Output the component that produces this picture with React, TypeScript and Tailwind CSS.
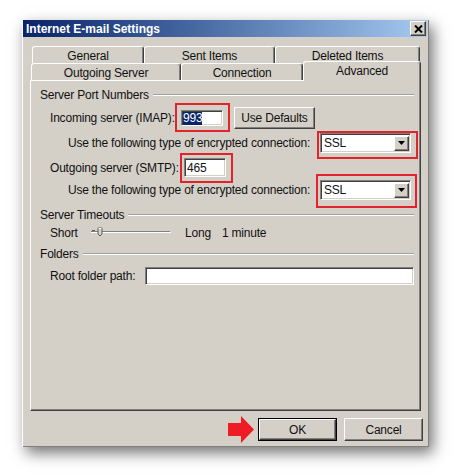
import React from 'react';

// win2000 style bevels
const sunken =
  'border border-t-[#808080] border-l-[#808080] border-b-white border-r-white shadow-[inset_1px_1px_0_#404040,inset_-1px_-1px_0_#d4d0c8]';
const raised =
  'border border-t-white border-l-white border-b-[#404040] border-r-[#404040] shadow-[inset_-1px_-1px_0_#808080]';

const Tab = ({ label, className }: { label: string; className: string }) => (
  <div
    className={`h-[17px] flex items-center justify-center pt-[1px] rounded-t-[3px] bg-[#d4d0c8] border-t border-l border-r border-t-white border-l-white border-r-[#404040] shadow-[inset_-1px_0_0_#808080] ${className}`}
  >
    {label}
  </div>
);

const GroupHeader = ({ title }: { title: string }) => (
  <div className="h-[14px] flex items-center">
    <span className="leading-[14px]">{title}</span>
    <div className="flex-1 ml-[4px] h-0 border-t border-t-[#a0a0a0] border-b border-b-white" />
  </div>
);

const Select = ({ value }: { value: string }) => (
  <div className={`w-[91px] h-[20px] bg-white flex items-center justify-between pl-[3px] pr-[1px] ${sunken}`}>
    <span className="leading-[14px]">{value}</span>
    <div className={`w-[15px] h-[15px] bg-[#d4d0c8] flex items-center justify-center ${raised}`}>
      <svg width="7" height="4" viewBox="0 0 7 4">
        <path d="M0 0h7L3.5 4z" fill="#000" />
      </svg>
    </div>
  </div>
);

const Mark = ({ className }: { className: string }) => (
  <div className={`absolute border-2 border-[#e3232c] pointer-events-none ${className}`} />
);

export default function App() {
  return (
    <div className="w-[458px] h-[476px] bg-white pt-[20px] pl-[22px] font-['Liberation_Sans',Arial,sans-serif] text-[12px] tracking-[-0.2px] text-[#111]">
      <div className="w-[407px] h-[427px] bg-[#d4d0c8] border-l border-l-white flex flex-col shadow-[inset_-1px_-1px_0_#808080,4px_6px_14px_rgba(0,0,0,0.55)]">
        {/* title bar */}
        <div className="h-[17px] mr-[2px] flex items-start justify-between bg-linear-to-r from-[#0a246a] to-[#a6caf0]">
          <span className="pl-[3px] h-[17px] flex items-center text-white font-bold tracking-normal">
            Internet E-mail Settings
          </span>
          <div className={`mt-[1px] mr-[1px] w-[16px] h-[15px] bg-[#d4d0c8] flex items-center justify-center ${raised}`}>
            <svg width="9" height="8" viewBox="0 0 9 8">
              <path d="M1 0.5l7 7M8 0.5l-7 7" stroke="#000" strokeWidth="2" />
            </svg>
          </div>
        </div>

        {/* tabs */}
        <div className="mt-[9px] ml-[9px] flex h-[17px]">
          <Tab label="General" className="w-[112px]" />
          <Tab label="Sent Items" className="w-[131px]" />
          <Tab label="Deleted Items" className="w-[145px]" />
        </div>
        <div className="ml-[8px] flex h-[17px] items-end relative z-10">
          <Tab label="Outgoing Server" className="w-[150px]" />
          <Tab label="Connection" className="w-[122px]" />
          <div className="w-[118px] h-[20px] mb-[-1px] pb-[1px] flex items-center justify-center rounded-t-[3px] bg-[#d4d0c8] border-t border-l border-r border-t-white border-l-white border-r-[#404040] shadow-[inset_-1px_0_0_#808080]">
            Advanced
          </div>
        </div>

        {/* panel */}
        <div className="ml-[7px] w-[391px] h-[331px] border border-t-white border-l-white border-b-[#404040] border-r-[#404040] shadow-[inset_-1px_-1px_0_#808080]">
          <div className="pl-[9px] pr-[6px] pt-[7px] flex flex-col">
            <GroupHeader title="Server Port Numbers" />

            <div className="mt-[5px] h-[22px] flex items-center pl-[10px]">
              <span className="w-[131px]">Incoming server (IMAP):</span>
              <div className="relative">
                <div className={`w-[42px] h-[16px] bg-white flex items-center pl-[1px] ${sunken}`}>
                  <span className="bg-[#0a246a] text-white leading-[13px]">993</span>
                </div>
                <Mark className="-left-[6px] -right-[7px] -top-[7px] -bottom-[6px]" />
              </div>
              <button className={`ml-[11px] w-[81px] h-[22px] bg-[#d4d0c8] ${raised}`}>Use Defaults</button>
            </div>

            <div className="mt-[4px] h-[20px] flex items-center pl-[28px]">
              <span className="w-[252px]">Use the following type of encrypted connection:</span>
              <div className="relative">
                <Select value="SSL" />
                <Mark className="-left-[3px] -right-[7px] -top-[2px] -bottom-[6px]" />
              </div>
            </div>

            <div className="mt-[5px] h-[19px] flex items-center pl-[10px]">
              <span className="w-[134px]">Outgoing server (SMTP):</span>
              <div className="relative">
                <div className={`w-[42px] h-[19px] bg-white flex items-center pl-[2px] ${sunken}`}>
                  <span>465</span>
                </div>
                <Mark className="-left-[4px] -right-[7px] -top-[5px] -bottom-[6px]" />
              </div>
            </div>

            <div className="mt-[3px] h-[20px] flex items-center pl-[28px]">
              <span className="w-[252px]">Use the following type of encrypted connection:</span>
              <div className="relative">
                <Select value="SSL" />
                <Mark className="-left-[4px] -right-[6px] -top-[6px] -bottom-[8px]" />
              </div>
            </div>

            <div className="mt-[8px]">
              <GroupHeader title="Server Timeouts" />
            </div>
            <div className="mt-[4px] h-[14px] flex items-center pl-[10px]">
              <span className="w-[41px]">Short</span>
              <svg width="80" height="12" viewBox="0 0 80 12">
                <rect x="0" y="4" width="79" height="1" fill="#808080" />
                <rect x="0" y="5" width="80" height="1" fill="#ffffff" />
                <rect x="1" y="3" width="3" height="1" fill="#606060" />
                <path d="M7 1h4v6l-2 2-2-2z" fill="#d4d0c8" stroke="#606060" strokeWidth="1" />
                <path d="M7.5 1.5h3" stroke="#fff" />
              </svg>
              <span className="ml-[14px]">Long</span>
              <span className="ml-[11px]">1 minute</span>
            </div>

            <div className="mt-[7px]">
              <GroupHeader title="Folders" />
            </div>
            <div className="mt-[6px] h-[18px] flex items-center pl-[10px]">
              <span className="w-[95px]">Root folder path:</span>
              <div className={`flex-1 h-[18px] bg-white ${sunken}`} />
            </div>
          </div>
        </div>

        {/* buttons */}
        <div className="mt-[7px] h-[23px] flex items-center justify-end pr-[6px]">
          <svg width="26" height="27" viewBox="0 0 26 27" className="mr-[4px]">
            <path d="M0 7h13V0l13 13.5L13 27v-7H0z" fill="#ee1c24" />
          </svg>
          <button className="w-[79px] h-[23px] border border-[#000] bg-[#d4d0c8] p-0">
            <div className={`w-full h-full flex items-center justify-center ${raised}`}>OK</div>
          </button>
          <button className={`ml-[7px] w-[79px] h-[23px] bg-[#d4d0c8] ${raised}`}>Cancel</button>
        </div>
      </div>
    </div>
  );
}
